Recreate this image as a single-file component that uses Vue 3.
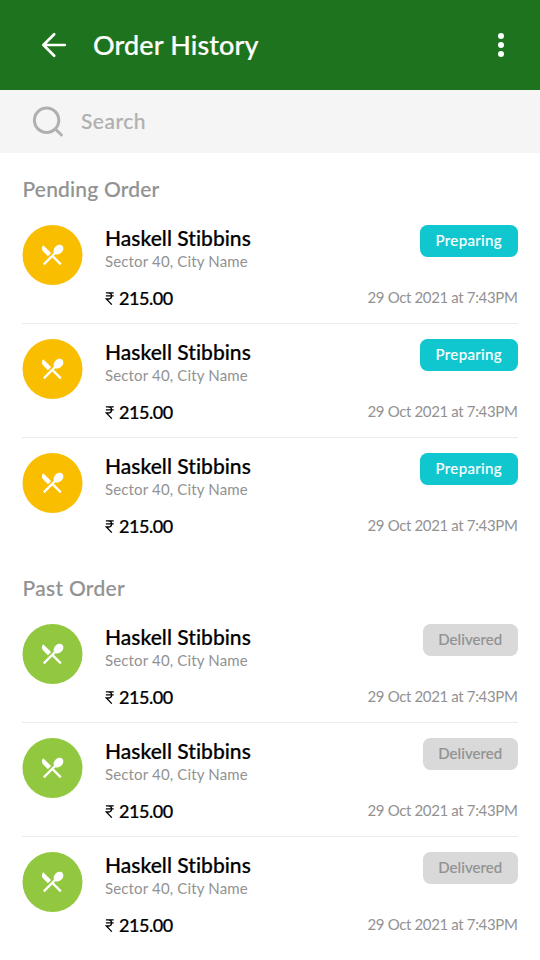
<script setup>
const makeOrders = (count) =>
  Array.from({ length: count }, (_, id) => ({
    id,
    name: 'Haskell Stibbins',
    place: 'Sector 40, City Name',
    price: '215.00',
    date: '29 Oct 2021 at 7:43PM',
  }))

const sections = [
  { title: 'Pending Order', status: 'Preparing', kind: 'pending', orders: makeOrders(3) },
  { title: 'Past Order', status: 'Delivered', kind: 'past', orders: makeOrders(3) },
]
</script>

<template>
  <div class="screen">
    <header class="topbar">
      <svg class="back" viewBox="0 0 26 26" fill="none" stroke="#fff" stroke-width="2.7" stroke-linecap="round" stroke-linejoin="round">
        <path d="M13.2 2.3 2.4 13l10.8 10.7M2.6 13h21.2" />
      </svg>
      <h1>Order History</h1>
      <svg class="more" viewBox="0 0 6 24" fill="#fff">
        <circle cx="3" cy="3" r="3" /><circle cx="3" cy="12" r="3" /><circle cx="3" cy="21" r="3" />
      </svg>
    </header>

    <div class="search">
      <svg viewBox="0 0 32 32" fill="none" stroke="#b0b0b0" stroke-width="3" stroke-linecap="round">
        <circle cx="14.6" cy="14.2" r="12.2" /><path d="M23.6 23.2 29.4 29" />
      </svg>
      <span>Search</span>
    </div>

    <section v-for="section in sections" :key="section.kind" :class="section.kind">
      <h2>{{ section.title }}</h2>
      <article v-for="order in section.orders" :key="order.id" class="order">
        <svg class="avatar" viewBox="0 0 61 60">
          <circle class="disc" cx="30.5" cy="30" r="30" />
          <path fill="#fff" transform="translate(16.8 16.2) scale(1.125)" d="M8.1 13.34l2.83-2.83L3.91 3.5c-1.56 1.56-1.56 4.09 0 5.66l4.19 4.18zm6.78-1.81c1.53.71 3.68.21 5.27-1.38 1.91-1.91 2.28-4.65.81-6.12-1.46-1.46-4.2-1.1-6.12.81-1.59 1.59-2.09 3.74-1.38 5.27L3.7 19.87l1.41 1.41L12 14.41l6.88 6.88 1.41-1.41L13.41 13l1.47-1.47z" />
        </svg>
        <div class="info">
          <div class="name">{{ order.name }}</div>
          <div class="place">{{ order.place }}</div>
          <div class="price">
            <svg class="rupee" viewBox="0 0 9 13" fill="none" stroke="#000" stroke-width="1.3">
              <path d="M.9.8h7.8M.9 3.9h7.8M1 .8h2.1c4.6 0 4.6 6.2 0 6.2H1.3l5.5 5.6" />
            </svg>
            <span>{{ order.price }}</span>
          </div>
        </div>
        <div class="side">
          <span class="badge">{{ section.status }}</span>
          <span class="date">{{ order.date }}</span>
        </div>
      </article>
    </section>
  </div>
</template>

<style>
body {
  margin: 0;
  background: #fff;
}
</style>

<style scoped>
.screen {
  width: 540px;
  height: 960px;
  overflow: hidden;
  background: #fff;
  color: #000;
  font-family: Lato, "Noto Sans", sans-serif;
  font-weight: 500;
  font-variant-ligatures: none;
  white-space: nowrap;
}
.topbar {
  display: flex;
  align-items: center;
  box-sizing: border-box;
  height: 90px;
  padding: 0 36px 0 41px;
  background: #1e741e;
  color: #fff;
}
.back {
  width: 26px;
  height: 26px;
}
h1 {
  flex: 1;
  margin: 0 0 0 26px;
  font-size: 27px;
  line-height: 32px;
  font-weight: 500;
  letter-spacing: 0.12px;
  -webkit-text-stroke: 0.2px currentColor;
}
.more {
  width: 6px;
  height: 24px;
}
.search {
  display: flex;
  align-items: center;
  box-sizing: border-box;
  height: 63px;
  padding-left: 32px;
  gap: 17px;
  background: #f5f5f5;
  color: #b0b0b0;
  font-size: 21px;
  letter-spacing: 0.5px;
}
.search svg {
  width: 32px;
  height: 32px;
}
.search span {
  padding-bottom: 2px;
  -webkit-text-stroke: 0.15px currentColor;
}
section {
  padding: 0 22.5px 0 22px;
}
h2 {
  box-sizing: border-box;
  margin: 0;
  padding: 23px 0 0 0.5px;
  height: 72px;
  font-size: 21px;
  line-height: 25px;
  font-weight: 500;
  letter-spacing: 0.18px;
  color: #929292;
  -webkit-text-stroke: 0.15px currentColor;
}
.past h2 {
  height: 57px;
  padding-top: 8px;
  letter-spacing: 0.3px;
}
.order {
  display: flex;
  box-sizing: border-box;
  height: 99px;
  margin-bottom: 15px;
  border-bottom: 1px solid #ececec;
}
.order:last-child {
  border-bottom-color: transparent;
}
.avatar {
  width: 61px;
  height: 60px;
}
.disc {
  fill: #f9be00;
}
.past .disc {
  fill: #91c83f;
}
.info {
  flex: 1;
  margin-left: 22px;
}
.name {
  height: 27px;
  font-size: 21px;
  line-height: 26px;
  letter-spacing: 0.03px;
  -webkit-text-stroke: 0.22px currentColor;
}
.place {
  height: 19px;
  font-size: 15px;
  line-height: 19px;
  font-weight: 400;
  letter-spacing: 0.15px;
  color: #929292;
}
.price {
  display: flex;
  align-items: center;
  height: 24px;
  margin-top: 15px;
  gap: 5px;
  font-size: 18px;
  line-height: 24px;
  letter-spacing: -0.45px;
  -webkit-text-stroke: 0.2px currentColor;
}
.rupee {
  width: 9px;
  height: 13px;
}
.side {
  display: flex;
  flex-direction: column;
  align-items: flex-end;
}
.badge {
  box-sizing: border-box;
  width: 97.5px;
  height: 31.5px;
  border-radius: 7.5px;
  background: #10c7cf;
  color: #fff;
  font-size: 15px;
  line-height: 31px;
  text-align: center;
  letter-spacing: 0.33px;
  -webkit-text-stroke: 0.12px currentColor;
}
.past .badge {
  width: 94.5px;
  background: #d9d9d9;
  color: #929292;
  letter-spacing: 0.05px;
}
.date {
  margin-top: 31.5px;
  font-size: 15px;
  line-height: 19px;
  font-weight: 400;
  letter-spacing: -0.36px;
  color: #929292;
}
</style>
